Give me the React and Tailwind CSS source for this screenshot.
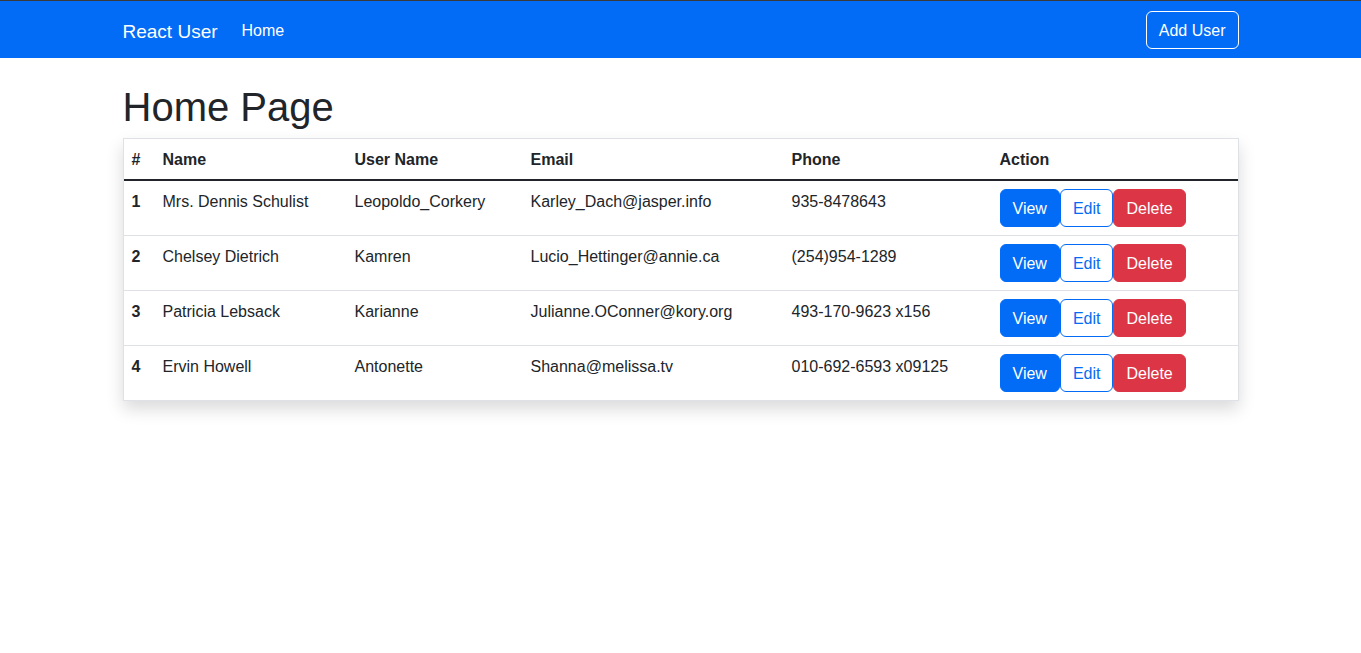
import React from 'react';

const users = [
  { id: 1, name: 'Mrs. Dennis Schulist', username: 'Leopoldo_Corkery', email: 'Karley_Dach@jasper.info', phone: '935-8478643' },
  { id: 2, name: 'Chelsey Dietrich', username: 'Kamren', email: 'Lucio_Hettinger@annie.ca', phone: '(254)954-1289' },
  { id: 3, name: 'Patricia Lebsack', username: 'Karianne', email: 'Julianne.OConner@kory.org', phone: '493-170-9623 x156' },
  { id: 4, name: 'Ervin Howell', username: 'Antonette', email: 'Shanna@melissa.tv', phone: '010-692-6593 x09125' },
];

function Navbar() {
  return (
    <nav className="bg-[#036cf6] border-t border-[#3a3a3a] pt-[9px] pb-2">
      <div className="max-w-[1140px] mx-auto px-3 flex items-center justify-between">
        <div className="flex items-center">
          <a href="#" className="text-white text-[19px] leading-[30px] pt-[7px] pb-[3px] mr-4">React User</a>
          <a href="#" className="text-white text-base leading-6 px-2 pt-[9px] pb-[7px]">Home</a>
        </div>
        <button className="text-white border border-white rounded-md px-3 pt-[7px] pb-[5px] text-base leading-6">
          Add User
        </button>
      </div>
    </nav>
  );
}

function UserTable() {
  return (
    <div className="border border-[#dee2e6] shadow-[0_8px_16px_rgba(0,0,0,0.15)]">
      <table className="w-full table-fixed border-collapse text-[#212529]">
        <colgroup>
          <col className="w-[31px]" />
          <col className="w-[192px]" />
          <col className="w-[176px]" />
          <col className="w-[261px]" />
          <col className="w-[208px]" />
          <col />
        </colgroup>
        <thead>
          <tr className="border-b-2 border-[#212529] text-left">
            <th className="px-2 pt-[9px] pb-[7px] font-bold">#</th>
            <th className="px-2 pt-[9px] pb-[7px] font-bold">Name</th>
            <th className="px-2 pt-[9px] pb-[7px] font-bold">User Name</th>
            <th className="px-2 pt-[9px] pb-[7px] font-bold">Email</th>
            <th className="px-2 pt-[9px] pb-[7px] font-bold">Phone</th>
            <th className="px-2 pt-[9px] pb-[7px] font-bold">Action</th>
          </tr>
        </thead>
        <tbody>
          {users.map((u, i) => (
            <tr key={u.id} className={i < users.length - 1 ? 'border-b border-[#dee2e6]' : ''}>
              <td className="px-2 pt-[9px] pb-[7px] align-top font-bold">{u.id}</td>
              <td className="px-2 pt-[9px] pb-[7px] align-top">{u.name}</td>
              <td className="px-2 pt-[9px] pb-[7px] align-top">{u.username}</td>
              <td className="px-2 pt-[9px] pb-[7px] align-top">{u.email}</td>
              <td className="px-2 pt-[9px] pb-[7px] align-top">{u.phone}</td>
              <td className="p-2 align-top">
                <div className="flex">
                  <button className="bg-[#036cf6] text-white border border-[#036cf6] rounded-md px-3 pt-[7px] pb-[5px] leading-6">View</button>
                  <button className="bg-white text-[#036cf6] border border-[#036cf6] rounded-md px-3 pt-[7px] pb-[5px] leading-6">Edit</button>
                  <button className="bg-[#dc3545] text-white border border-[#dc3545] rounded-md px-3 pt-[7px] pb-[5px] leading-6">Delete</button>
                </div>
              </td>
            </tr>
          ))}
        </tbody>
      </table>
    </div>
  );
}

export default function App() {
  return (
    <div className="min-h-screen bg-white text-base text-[#212529] font-['Segoe_UI','Liberation_Sans',sans-serif]">
      <Navbar />
      <div className="max-w-[1140px] mx-auto px-3">
        <div className="pt-[26px] pb-4">
          <h1 className="text-[40px] leading-[46px] font-medium mb-2 text-[#212529]">Home Page</h1>
          <UserTable />
        </div>
      </div>
    </div>
  );
}
